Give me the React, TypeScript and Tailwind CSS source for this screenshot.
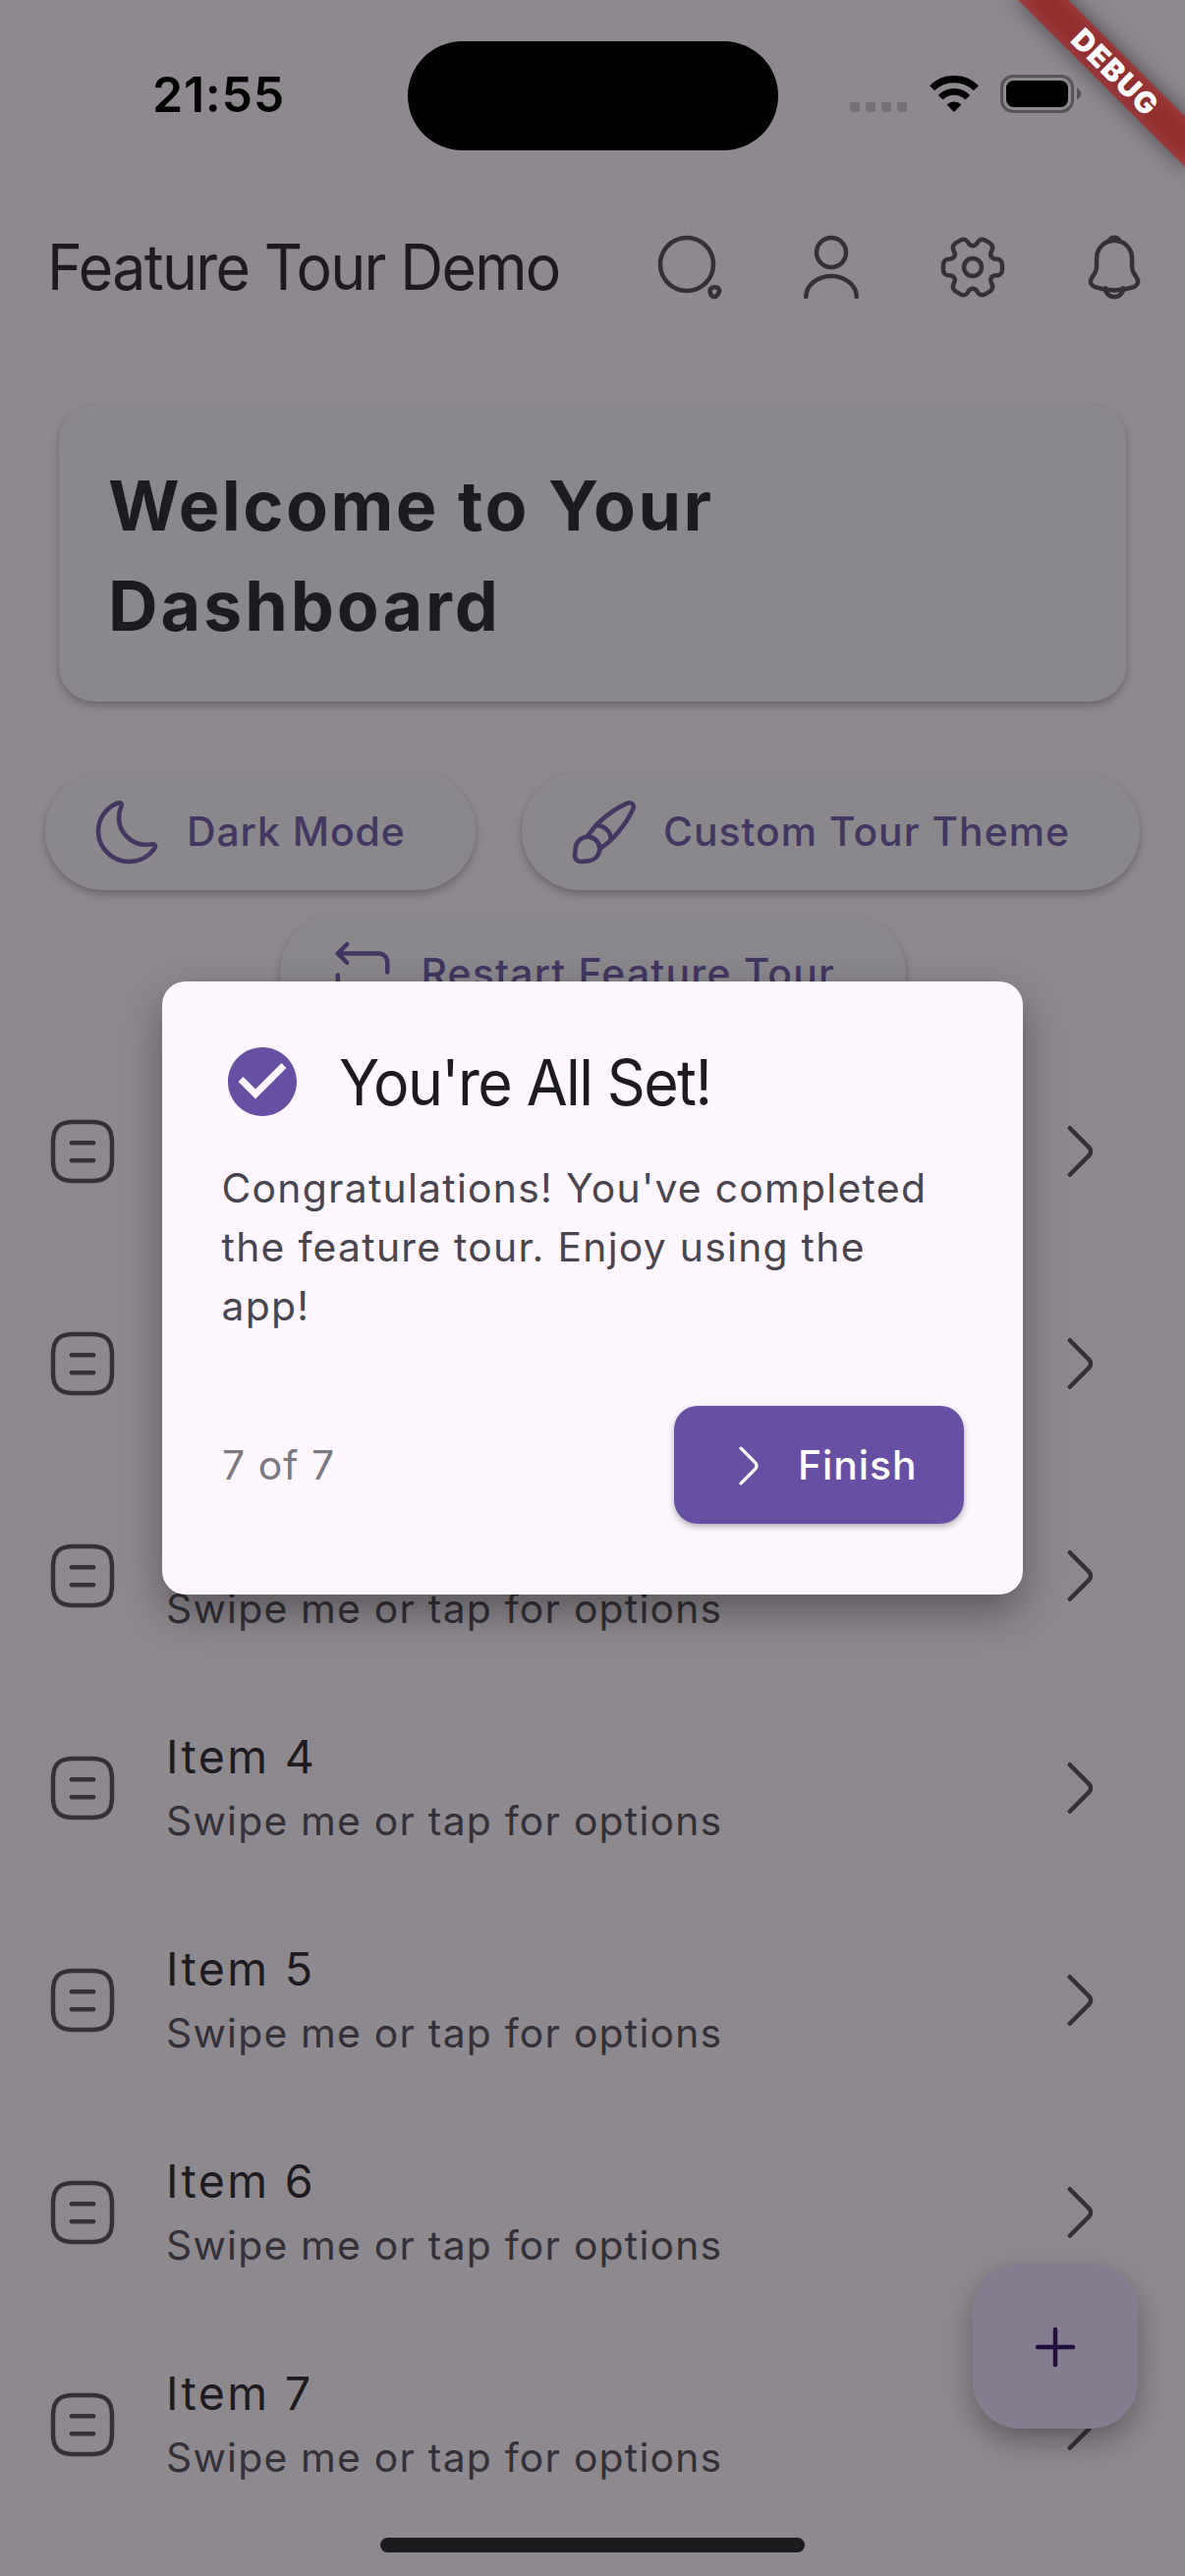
import type { ReactNode } from "react";

function Icon({ className, children }: { className: string; children: ReactNode }) {
  return (
    <svg
      viewBox="0 0 24 24"
      fill="none"
      stroke="currentColor"
      strokeWidth="1.5"
      strokeLinecap="round"
      strokeLinejoin="round"
      className={`shrink-0 ${className}`}
    >
      {children}
    </svg>
  );
}

const SearchIcon = () => (
  <Icon className="size-18">
    <circle cx="11" cy="11" r="9" />
    <path d="M18.93 20.69C19.46 22.29 20.67 22.45 21.6 21.05C22.45 19.77 21.89 18.72 20.35 18.72C19.21 18.71 18.57 19.6 18.93 20.69Z" />
  </Icon>
);

const UserIcon = () => (
  <Icon className="size-18">
    <circle cx="12" cy="7" r="5" />
    <path d="M20.59 22C20.59 18.13 16.74 15 12 15C7.26 15 3.41 18.13 3.41 22" />
  </Icon>
);

const SettingsIcon = () => (
  <Icon className="size-18">
    <circle cx="12" cy="12" r="3" />
    <path d="M2 12.88V11.12C2 10.08 2.85 9.22 3.9 9.22C5.71 9.22 6.45 7.94 5.54 6.37C5.02 5.47 5.33 4.3 6.24 3.78L7.97 2.79C8.76 2.32 9.78 2.6 10.25 3.39L10.36 3.58C11.26 5.15 12.74 5.15 13.65 3.58L13.76 3.39C14.23 2.6 15.25 2.32 16.04 2.79L17.77 3.78C18.68 4.3 18.99 5.47 18.47 6.37C17.56 7.94 18.3 9.22 20.11 9.22C21.15 9.22 22.01 10.07 22.01 11.12V12.88C22.01 13.92 21.16 14.78 20.11 14.78C18.3 14.78 17.56 16.06 18.47 17.63C18.99 18.54 18.68 19.7 17.77 20.22L16.04 21.21C15.25 21.68 14.23 21.4 13.76 20.61L13.65 20.42C12.75 18.85 11.27 18.85 10.36 20.42L10.25 20.61C9.78 21.4 8.76 21.68 7.97 21.21L6.24 20.22C5.33 19.7 5.02 18.53 5.54 17.63C6.45 16.06 5.71 14.78 3.9 14.78C2.85 14.78 2 13.92 2 12.88Z" />
  </Icon>
);

const BellIcon = () => (
  <Icon className="size-18">
    <path d="M12.02 2.91C8.71 2.91 6.02 5.6 6.02 8.91V11.8C6.02 12.41 5.76 13.34 5.45 13.86L4.3 15.77C3.59 16.95 4.08 18.26 5.38 18.7C9.69 20.14 14.34 20.14 18.65 18.7C19.86 18.3 20.39 16.87 19.73 15.77L18.58 13.86C18.28 13.34 18.02 12.41 18.02 11.8V8.91C18.02 5.61 15.32 2.91 12.02 2.91Z" />
    <path d="M13.87 3.2C13.56 3.11 13.24 3.04 12.91 3C11.95 2.88 11.03 2.95 10.17 3.2C10.46 2.46 11.18 1.94 12.02 1.94C12.86 1.94 13.58 2.46 13.87 3.2Z" fill="currentColor" />
    <path d="M15.02 19.06C15.02 20.71 13.67 22.06 12.02 22.06C11.2 22.06 10.44 21.72 9.9 21.18C9.36 20.64 9.02 19.88 9.02 19.06" />
  </Icon>
);

const MoonIcon = () => (
  <Icon className="size-18">
    <path d="M2.03 12.42C2.39 17.57 6.76 21.76 11.99 21.99C15.68 22.15 18.98 20.43 20.96 17.72C21.78 16.61 21.34 15.87 19.97 16.12C19.3 16.24 18.61 16.29 17.89 16.26C13 16.06 9 11.97 8.98 7.14C8.97 5.84 9.24 4.61 9.73 3.49C10.27 2.25 9.62 1.66 8.37 2.19C4.41 3.86 1.7 7.84 2.03 12.42Z" />
  </Icon>
);

const BrushIcon = () => (
  <Icon className="size-18">
    <path d="M21.81 3.94C20.27 7.78 16.41 13 13.18 15.59L11.21 17.17C10.96 17.35 10.71 17.51 10.43 17.62C10.43 17.44 10.42 17.24 10.39 17.05C10.28 16.21 9.9 15.43 9.23 14.76C8.55 14.08 7.72 13.68 6.87 13.57C6.67 13.56 6.47 13.54 6.27 13.56C6.38 13.25 6.55 12.96 6.76 12.72L8.32 10.75C10.9 7.52 16.14 3.64 19.97 2.11C20.56 1.89 21.13 2.05 21.49 2.42C21.87 2.79 22.05 3.36 21.81 3.94Z" />
    <path d="M10.43 17.62C10.43 18.72 10.01 19.77 9.22 20.57C8.61 21.18 7.78 21.6 6.79 21.73L4.33 22C2.99 22.15 1.84 21.01 2 19.65L2.27 17.19C2.51 15 4.34 13.6 6.28 13.56C6.48 13.55 6.69 13.56 6.88 13.57C7.73 13.68 8.55 14.07 9.24 14.76C9.91 15.43 10.29 16.21 10.4 17.05C10.41 17.24 10.43 17.43 10.43 17.62Z" />
    <path d="M14.24 14.47C14.24 11.86 12.12 9.74 9.51 9.74" />
  </Icon>
);

const RepeatIcon = () => (
  <Icon className="size-18">
    <path d="M3.58 5.16H17.42C19.08 5.16 20.42 6.5 20.42 8.16V11.48" />
    <path d="M6.74 2L3.58 5.16L6.74 8.32" />
    <path d="M20.42 18.84H6.58C4.92 18.84 3.58 17.5 3.58 15.84V12.52" />
    <path d="M17.26 22L20.42 18.84L17.26 15.68" />
  </Icon>
);

const NoteIcon = () => (
  <Icon className="size-18">
    <path d="M9 22H15C20 22 22 20 22 15V9C22 4 20 2 15 2H9C4 2 2 4 2 9V15C2 20 4 22 9 22Z" />
    <path d="M8.3 9.1H15.7" />
    <path d="M8.3 15.05H15.7" />
  </Icon>
);

const ChevronIcon = ({ className }: { className: string }) => (
  <Icon className={className}>
    <path d="M8.91 19.92L15.43 13.4C16.2 12.63 16.2 11.37 15.43 10.6L8.91 4.08" />
  </Icon>
);

function PillButton({ width, icon, children }: { width: string; icon: ReactNode; children: ReactNode }) {
  return (
    <button
      className={`flex h-[120px] items-center gap-6 rounded-full bg-[#F7F2FA] pt-[1px] pl-12 text-[40.8px] font-medium text-[#6750A4] shadow-[0_4px_8px_rgba(0,0,0,0.3)] ${width}`}
    >
      {icon}
      {children}
    </button>
  );
}

function ListRow({ n }: { n: number }) {
  return (
    <li className="flex h-[216px] shrink-0 items-center px-[72px] pl-12 text-[#49454F]">
      <NoteIcon />
      <div className="ml-[49px] flex grow flex-col pb-[3px]">
        <div className="text-[46.6px] leading-[70px] tracking-[2.35px] text-[#1D1B20]">Item {n}</div>
        <div className="text-[40.8px] leading-[60px] tracking-[1.24px]">Swipe me or tap for options</div>
      </div>
      <ChevronIcon className="size-18" />
    </li>
  );
}

function StatusBar() {
  return (
    <div className="absolute inset-x-0 top-0 h-[187px] text-black">
      <div className="absolute top-[66px] left-[155px] text-[50px] leading-[60px] font-semibold tracking-[0.75px]">21:55</div>
      <div className="absolute top-[41.5px] left-[414.5px] h-[111px] w-[377px] rounded-[55.5px] bg-black" />
      <div className="absolute top-[104px] left-[865px] flex gap-[6px]">
        {[0, 1, 2, 3].map((i) => (
          <span key={i} className="size-[10px] rounded-[3px] bg-[#747075]" />
        ))}
      </div>
      <svg viewBox="0 0 50 38" fill="none" stroke="#000" className="absolute top-[77px] left-[945.5px] h-[38px] w-[50px]">
        <path d="M2.6 12.7A32 32 0 0 1 47.4 12.7" strokeWidth="7.2" />
        <path d="M11.2 22.2A19.2 19.2 0 0 1 38.8 22.2" strokeWidth="6.6" />
        <path d="M17.6 29.4A11 11 0 0 1 32.4 29.4L25.6 36.6Q25 37.2 24.4 36.6Z" fill="#000" stroke="none" />
      </svg>
      <svg viewBox="0 0 83 39" className="absolute top-[76px] left-[1018px] h-[39px] w-[83px]">
        <rect x="1.5" y="1.5" width="72" height="36" rx="11.5" fill="none" stroke="#565358" strokeWidth="3" />
        <rect x="6" y="6" width="63" height="27" rx="7.5" fill="#000" />
        <path d="M78 13.5C80.4 14.6 82 16.9 82 19.5S80.4 24.4 78 25.5Z" fill="#565358" />
      </svg>
    </div>
  );
}

function DebugBanner() {
  return (
    <div className="absolute top-0 right-0 size-0 rotate-45">
      <div className="absolute top-[84px] left-[-120px] h-9 w-[240px] bg-black/50 blur-[11px]" />
      <div className="absolute top-[84px] left-[-120px] flex h-9 w-[240px] items-center justify-center bg-[#B71C1C]/63 pl-[4px] text-[30px] leading-none font-black tracking-[1.3px] text-white">
        DEBUG
      </div>
    </div>
  );
}

function TourDialog() {
  return (
    <div className="absolute inset-0 flex items-center justify-center">
      <div className="h-[624px] w-[876px] rounded-[24px] bg-[#FEF7FF] p-[60px] shadow-[0_18px_42px_rgba(0,0,0,0.36)]">
        <div className="flex h-[84px] items-center gap-9">
          <svg viewBox="0 0 24 24" fill="#6750A4" className="size-[84px] shrink-0">
            <path d="M12 2C6.48 2 2 6.48 2 12s4.48 10 10 10 10-4.48 10-10S17.52 2 12 2zm-2 15l-5-5 1.41-1.41L10 14.17l7.59-7.59L19 8l-9 9z" />
          </svg>
          <h2 className="origin-left scale-x-95 pt-[2px] text-[64px] leading-[84px] font-normal tracking-[-1.66px] text-[#1D1B20]">
            You're All Set!
          </h2>
        </div>
        <p className="mt-9 ml-[0.5px] text-[40.8px] leading-[60px] tracking-[1.29px] whitespace-nowrap text-[#49454F]">
          Congratulations! You've completed
          <br />
          the feature tour. Enjoy using the
          <br />
          app!
        </p>
        <div className="mt-18 flex items-center justify-between">
          <span className="pt-[2px] pl-[1px] text-[40.8px] tracking-[1.08px] text-[#7C787F]">7 of 7</span>
          <button className="flex h-[120px] w-[295.5px] items-center gap-[24.5px] rounded-[24px] bg-[#6750A4] pt-[1px] pl-12 text-[40.8px] font-medium tracking-[0.98px] text-white shadow-[0_3px_7px_rgba(0,0,0,0.3)]">
            <ChevronIcon className="size-[54px]" />
            Finish
          </button>
        </div>
      </div>
    </div>
  );
}

export default function App() {
  return (
    <div className="relative h-[2622px] w-[1206px] overflow-hidden bg-[#FEF7FF] font-['Inter',sans-serif] text-[#1D1B20]">
      <div className="flex h-full flex-col pt-[187px]">
        <header className="flex h-[168px] shrink-0 items-center justify-between pl-[47.5px]">
          <h1 className="w-[560px] origin-left scale-x-95 pt-[1px] text-[64px] leading-[80px] font-normal tracking-[-1.75px] whitespace-nowrap">
            Feature Tour Demo
          </h1>
          <nav className="flex pt-[1px] text-[#49454F]">
            {[SearchIcon, UserIcon, SettingsIcon, BellIcon].map((Glyph, i) => (
              <button key={i} className="flex size-36 shrink-0 items-center justify-center">
                <Glyph />
              </button>
            ))}
          </nav>
        </header>

        <section className="mx-[60px] mt-[57px] h-[302px] shrink-0 rounded-[36px] bg-[#F7F2FA] pt-[52px] pl-[50px] text-[70px] leading-[102px] font-bold shadow-[0_4px_8px_rgba(0,0,0,0.3)]">
          <div className="tracking-[2.5px]">Welcome to Your</div>
          <div className="tracking-[2.95px]">Dashboard</div>
        </section>

        <section className="mt-18 flex shrink-0 flex-wrap justify-center gap-x-[47px] gap-y-6">
          <PillButton width="w-[438px] tracking-[1px]" icon={<MoonIcon />}>
            Dark Mode
          </PillButton>
          <PillButton width="w-[629px] tracking-[1.04px]" icon={<BrushIcon />}>
            Custom Tour Theme
          </PillButton>
          <PillButton width="w-[637px] tracking-[1.22px]" icon={<RepeatIcon />}>
            Restart Feature Tour
          </PillButton>
        </section>

        <ul className="mt-[13.5px] flex flex-col">
          {[1, 2, 3, 4, 5, 6, 7].map((n) => (
            <ListRow key={n} n={n} />
          ))}
        </ul>
      </div>

      <button className="absolute right-12 bottom-[150px] flex size-[168px] items-center justify-center rounded-[48px] bg-[#EADDFF] text-[#21005D] shadow-[0_13px_30px_rgba(0,0,0,0.36)]">
        <Icon className="mt-[2px] size-18">
          <path d="M6 12H18" />
          <path d="M12 18V6" />
        </Icon>
      </button>

      <div className="absolute inset-0 bg-[#1D1B20]/50" />
      <TourDialog />
      <StatusBar />
      <DebugBanner />
      <div className="absolute bottom-6 left-1/2 h-[15px] w-[432px] -translate-x-1/2 rounded-full bg-[#1C1B1D]" />
    </div>
  );
}
